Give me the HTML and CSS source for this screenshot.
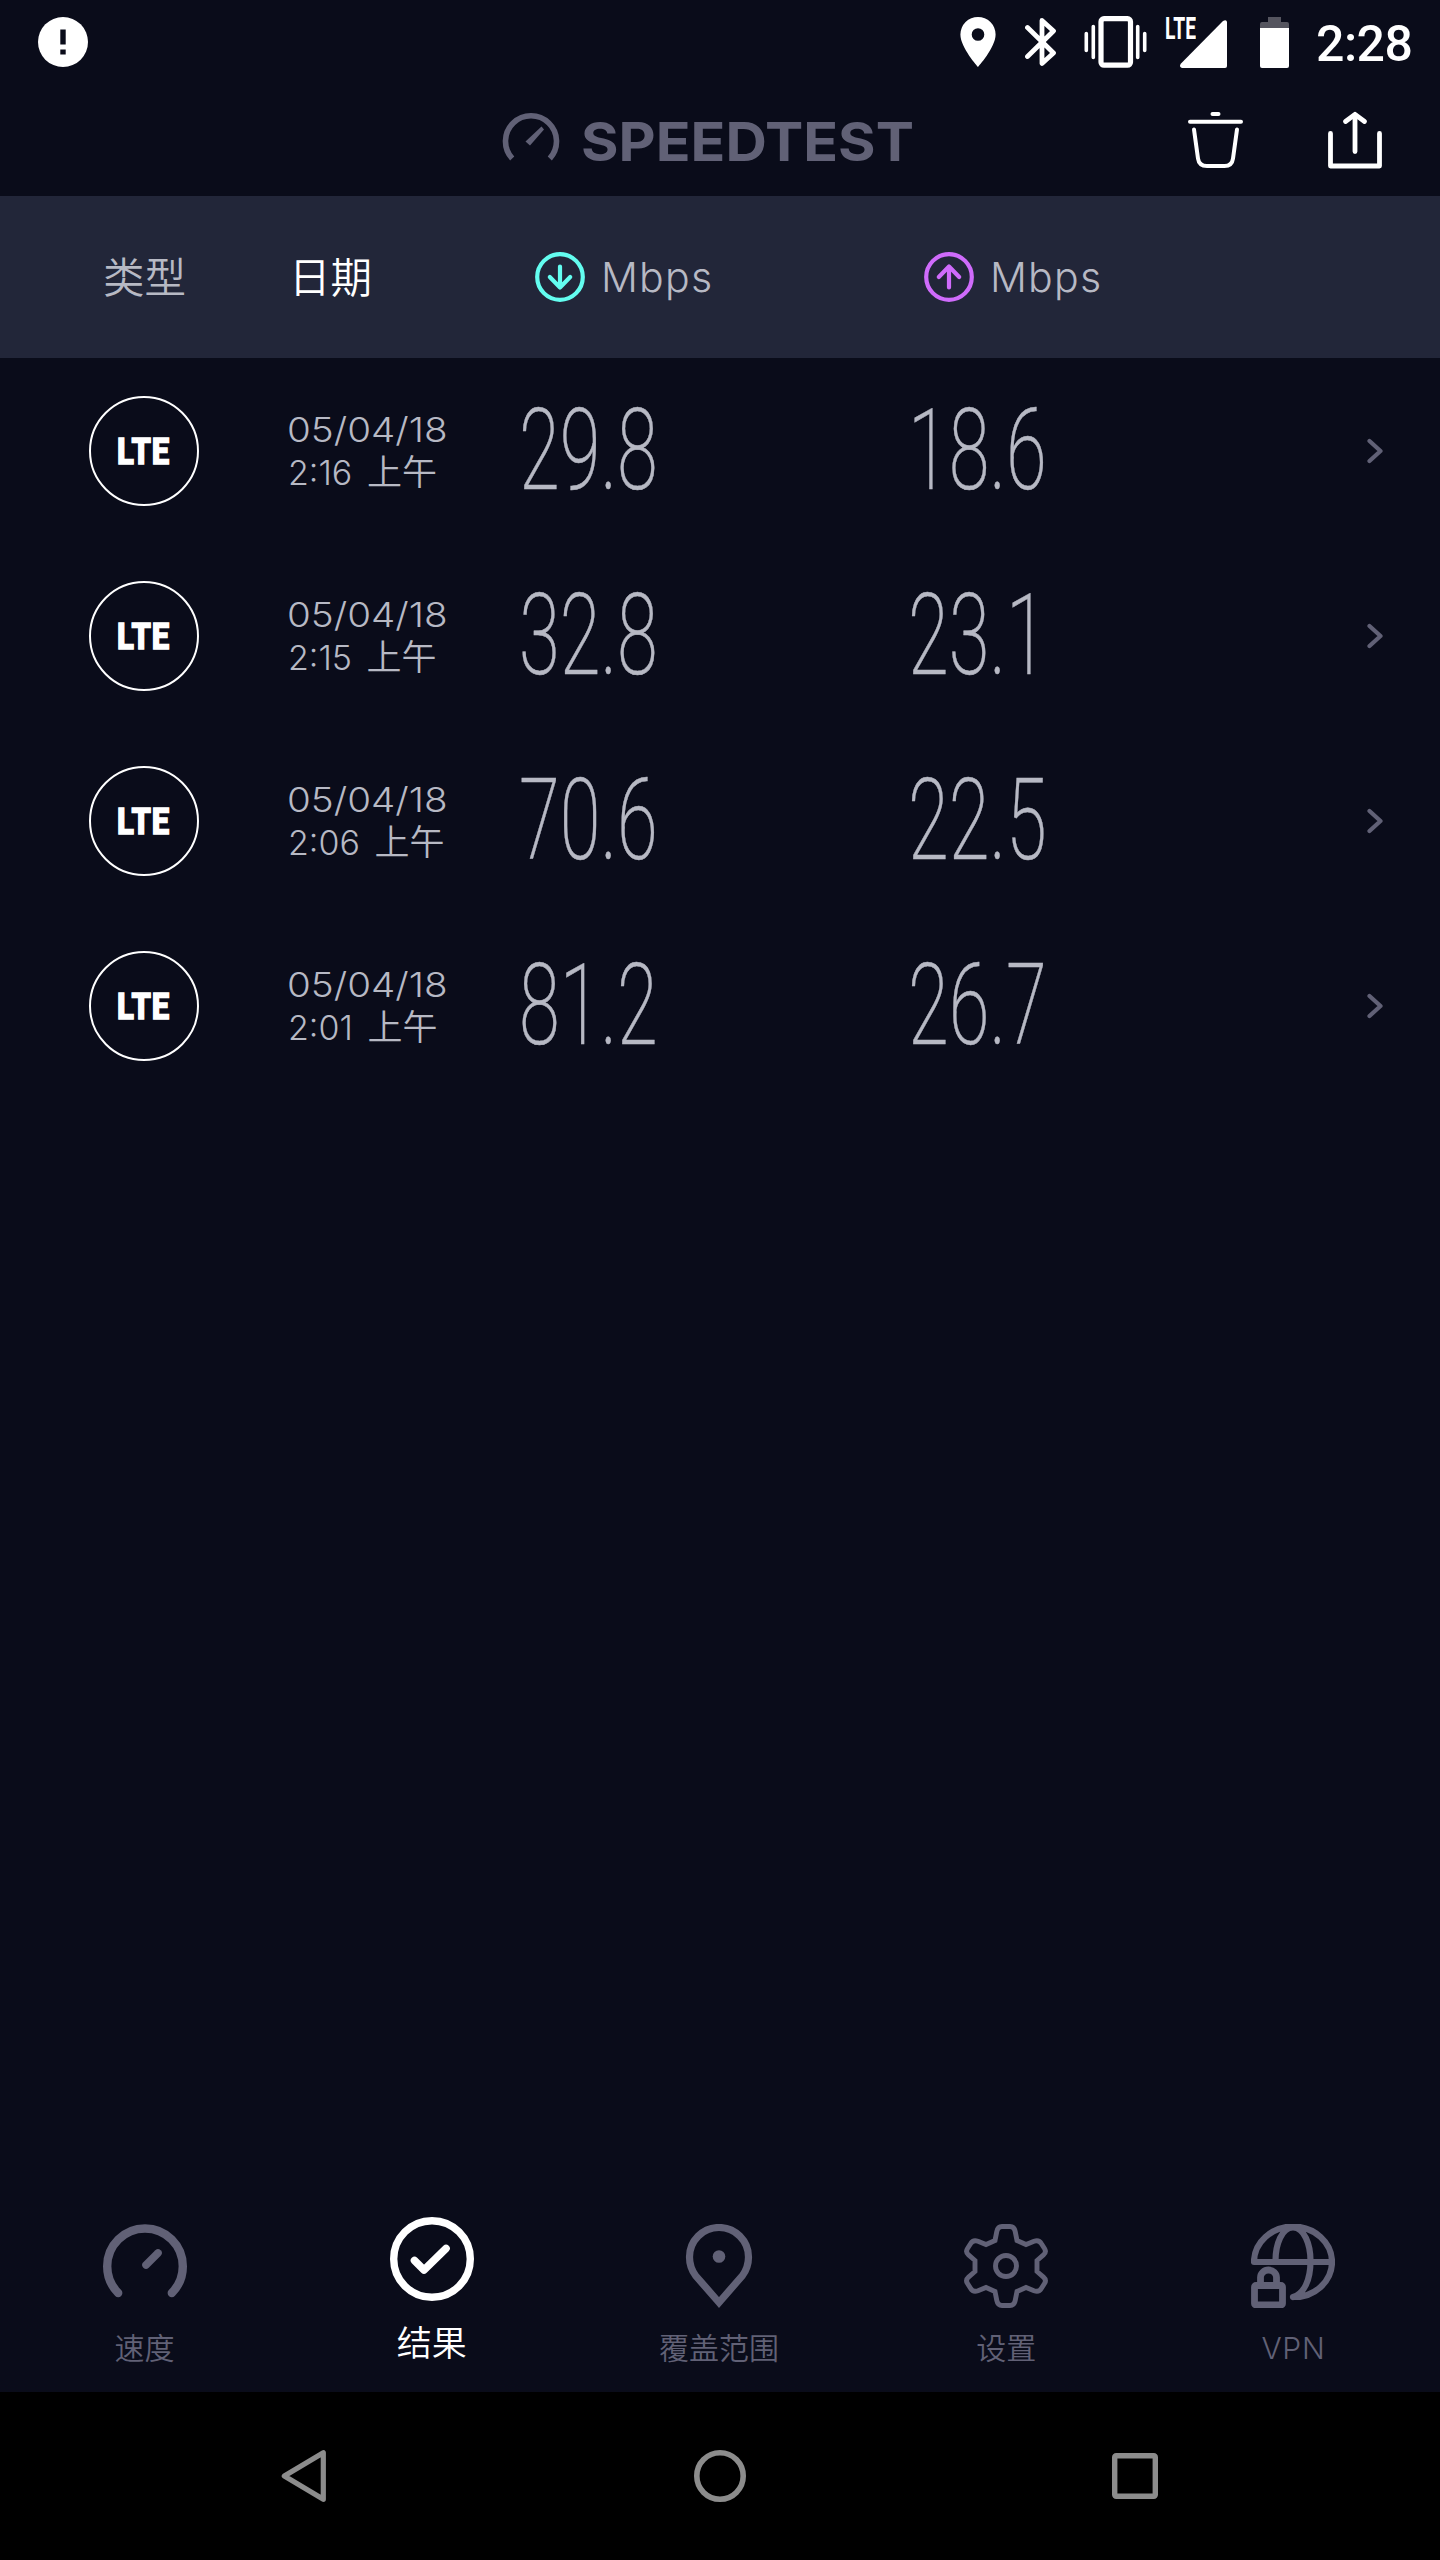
FILE: index.html
```html
<!DOCTYPE html>
<html lang="zh-CN">
<head>
<meta charset="utf-8">
<title>Speedtest</title>
<link rel="stylesheet" href="styles.css">
</head>
<body>
<svg class="defs" width="0" height="0" aria-hidden="true">
  <symbol id="chevron" viewBox="0 0 17 26"><path d="M2.5 3 L13.5 13 L2.5 23" fill="none" stroke="currentColor" stroke-width="4.2" stroke-linecap="round" stroke-linejoin="round"/></symbol>
</svg>
<div class="app">
  <div class="status">
    <svg class="alert" width="50" height="50" viewBox="0 0 50 50"><circle cx="25" cy="25" r="25" fill="#fff"/><path d="M22.3 12.5h5.4v15h-5.4zM22.3 32.5h5.4v5h-5.4z" fill="#0a0c1a"/></svg>
    <div class="status-icons">
      <svg width="36" height="50" viewBox="0 0 36 50"><path fill="#fff" fill-rule="evenodd" d="M18 0A17.6 17.6 0 0 0 .4 17.5C.4 30.5 18 50 18 50S35.600 30.500 35.600 17.500A17.600 17.600 0 0 0 18 0ZM18 11.200a6.300 6.300 0 1 1 0 12.600a6.300 6.300 0 0 1 0-12.600Z"/></svg>
      <svg class="bt" width="32" height="50" viewBox="0 0 32 50"><path d="M2.500 10.500L28.500 36 17 46.500V3.500L28.500 14 2.500 39.500" fill="none" stroke="#fff" stroke-width="4.800" stroke-linejoin="round" stroke-linecap="round"/></svg>
      <svg class="vib" width="63" height="52" viewBox="0 0 63 52"><rect x="17" y="2.700" width="29.500" height="46.500" rx="3" fill="none" stroke="#fff" stroke-width="5.200"/><path d="M2.300 17.500V34.500M9.300 10.500V41.500M53.700 10.500V41.500M60.700 17.500V34.500" stroke="#fff" stroke-width="3.600" stroke-linecap="round"/></svg>
      <div class="sig">
        <svg width="63" height="51" viewBox="0 0 63 51"><path d="M17 51Q13.500 49.500 16 46.500L58 4Q61.500 2 62 5V49Q62 51 60 51Z" fill="#fff"/></svg>
        <span class="sig-text">LTE</span>
      </div>
      <svg class="bat" width="29" height="51" viewBox="0 0 29 51"><path d="M8 0H21V5H27Q29 5 29 7V12H0V7Q0 5 2 5H8Z" fill="#55555f"/><path d="M0 11H29V49Q29 51 27 51H2Q0 51 0 49Z" fill="#fff"/></svg>
      <span class="clock">2:28</span>
    </div>
  </div>

  <header class="bar">
    <div class="logo">
      <svg width="58" height="50" viewBox="502 111 58 50"><path d="M512.200 158.500A25.500 25.500 0 1 1 549.800 158.500" fill="none" stroke="#616176" stroke-width="5.600"/><path d="M525.500 141.500L541.500 126.500 544 129.500 530 145.500Z" fill="#616176"/></svg>
      <span class="brand">SPEEDTEST</span>
    </div>
    <svg class="trash" width="57" height="58" viewBox="1187 111 57 58"><path d="M1212.500 114H1218.500M1190 121.800H1241M1194 129.500L1198 158.500Q1199 166 1207 166H1224.500Q1232 166 1233 158.500L1237 129.500" fill="none" stroke="#fff" stroke-width="4" stroke-linecap="round"/></svg>
    <svg class="share" width="56" height="58" viewBox="1327 111 56 58"><path d="M1330.500 133.500V166H1379.500V133.500M1355 151.500V115M1345.500 121.500L1355 114.300 1364.500 121.500" fill="none" stroke="#fff" stroke-width="4.800" stroke-linecap="round" stroke-linejoin="round"/></svg>
  </header>

  <div class="grid thead">
    <span class="th-type">类型</span>
    <span class="th-date">日期</span>
    <span class="th-speed"><svg width="50" height="50" viewBox="0 0 50 50" fill="none" stroke="#63fdf0" stroke-width="4.200" stroke-linecap="round" stroke-linejoin="round"><circle cx="25" cy="25" r="22.800"/><path d="M25 14.500V35M14.800 25L25 35.500 35.200 25"/></svg><b class="mbps">Mbps</b></span>
    <span class="th-speed"><svg width="50" height="50" viewBox="0 0 50 50" fill="none" stroke="#cf6bfb" stroke-width="4.200" stroke-linecap="round" stroke-linejoin="round"><circle cx="25" cy="25" r="22.800"/><path d="M25 35.500V15M14.800 25L25 14.500 35.200 25"/></svg><b class="mbps">Mbps</b></span>
  </div>

  <main class="results">
    <div class="grid row"><span class="badge"><b>LTE</b></span><span class="date"><b>05/04/18</b><span>2:16 <i>上午</i></span></span><span class="num"><b>29.8</b></span><span class="num"><b>18.6</b></span><svg class="chev" width="17" height="26"><use href="#chevron"/></svg></div>
    <div class="grid row"><span class="badge"><b>LTE</b></span><span class="date"><b>05/04/18</b><span>2:15 <i>上午</i></span></span><span class="num"><b>32.8</b></span><span class="num"><b>23.1</b></span><svg class="chev" width="17" height="26"><use href="#chevron"/></svg></div>
    <div class="grid row"><span class="badge"><b>LTE</b></span><span class="date"><b>05/04/18</b><span>2:06 <i>上午</i></span></span><span class="num"><b>70.6</b></span><span class="num"><b>22.5</b></span><svg class="chev" width="17" height="26"><use href="#chevron"/></svg></div>
    <div class="grid row"><span class="badge"><b>LTE</b></span><span class="date"><b>05/04/18</b><span>2:01 <i>上午</i></span></span><span class="num"><b>81.2</b></span><span class="num"><b>26.7</b></span><svg class="chev" width="17" height="26"><use href="#chevron"/></svg></div>
  </main>

  <nav class="tabs">
    <div class="tab"><svg width="84" height="84" viewBox="-42 -42 84 84" fill="none" stroke="currentColor" stroke-linecap="round"><path d="M-26.800 27A37.800 37.800 0 1 1 26.800 27" stroke-width="8.400"/><path d="M1 -1L13 -13" stroke-width="7.600"/></svg><span>速度</span></div>
    <div class="tab active"><svg width="84" height="84" viewBox="-42 -42 84 84" fill="none" stroke="currentColor" stroke-linecap="round" stroke-linejoin="round"><circle r="38.300" stroke-width="7.400"/><path d="M-17.500 1.500L-8 11 14 -10.500" stroke-width="7.600"/></svg><span>结果</span></div>
    <div class="tab"><svg width="84" height="84" viewBox="-42 -42 84 84" fill="none" stroke="currentColor"><path d="M0 36.500L-23.500 9.500C-27.500 4 -29.500 -2 -29.500 -9A29.500 29.500 0 0 1 29.500 -9C29.500 -2 27.500 4 23.500 9.500Z" stroke-width="7.200"/><circle cx="0" cy="-9.500" r="6.300" fill="currentColor" stroke="none"/></svg><span>覆盖范围</span></div>
    <div class="tab"><svg width="84" height="84" viewBox="-42 -42 84 84" fill="none" stroke="currentColor" stroke-width="4.900"><path d="M-11 -25.500L-9.200 -34.500Q-8.200 -39.500 -4 -39.500H4Q8.200 -39.500 9.200 -34.500L11 -25.500 20 -21.500 28 -24.800Q33 -26.500 35.300 -22.500L38.500 -17.500Q40.800 -14 37.500 -11.200L31 -5.500V5.500L37.500 11.200Q40.800 14 38.500 17.500L35.300 22.500Q33 26.500 28 24.800L20 21.500 11 25.500 9.200 34.500Q8.200 39.500 4 39.500H-4Q-8.200 39.500 -9.200 34.500L-11 25.500 -20 21.500 -28 24.800Q-33 26.500 -35.300 22.500L-38.500 17.500Q-40.800 14 -37.500 11.200L-31 5.500V-5.500L-37.500 -11.200Q-40.800 -14 -38.500 -17.500L-35.300 -22.500Q-33 -26.500 -28 -24.800L-20 -21.500Z"/><circle r="10.500"/></svg><span>设置</span></div>
    <div class="tab"><svg width="84" height="84" viewBox="0 0 84 84" fill="none" stroke="currentColor" stroke-linejoin="round" stroke-linecap="round"><path d="M3 38A38.500 35 0 0 1 81 38A38 35 0 0 1 42 73M3 38H81M24.500 37C24.500 20 31 3.500 42 3.500C53 3.500 59.500 20 59.500 37C59.500 56 53 70 42 73" stroke-width="6.200"/><path d="M9.500 59V53.500A8 7.500 0 0 1 25.500 53.500V59" stroke-width="6.800"/><rect x="3.500" y="61.500" width="28" height="19.500" rx="1.500" stroke-width="6.800"/></svg><span class="vpn">VPN</span></div>
  </nav>

  <div class="sysnav">
    <svg width="46" height="54" viewBox="281 2449 46 54"><path d="M323.300 2452.700V2499.300L284.300 2476Z" fill="none" stroke="#8c8c8c" stroke-width="5.200" stroke-linejoin="round"/></svg>
    <svg width="52" height="52" viewBox="0 0 52 52"><circle cx="26" cy="26" r="23.200" fill="none" stroke="#8c8c8c" stroke-width="5.600"/></svg>
    <svg width="46" height="46" viewBox="0 0 46 46"><rect x="2.700" y="2.700" width="40.600" height="40.600" rx="1.500" fill="none" stroke="#8c8c8c" stroke-width="5.400"/></svg>
  </div>
</div>
</body>
</html>
```
FILE: styles.css
```css
* { box-sizing: border-box; }
body { margin: 0; background: #0a0c1a; }
.defs { display: block; height: 0; }
b, i { font-weight: inherit; font-style: normal; }
svg { display: block; flex: none; }
.app {
  width: 1440px; height: 2560px; display: flex; flex-direction: column;
  color: #fff; font-family: Inter, "Noto Sans CJK SC", sans-serif; white-space: nowrap; overflow: hidden;
}
.status { height: 84px; display: flex; justify-content: space-between; align-items: center; padding: 0 28px 0 38px; }
.status-icons { display: flex; align-items: center; }
.bt { margin-left: 29px; }
.vib { margin-left: 27px; }
.sig { margin-left: 18px; position: relative; }
.sig-text {
  position: absolute; left: 0; top: -5px; font: 700 31px/34px Roboto, sans-serif;
  transform: scaleX(.62); transform-origin: left;
}
.bat { margin-left: 32px; }
.clock { margin-left: 27px; width: 96px; font: 500 50px/60px Roboto, sans-serif; padding-top: 4px; letter-spacing: -.5px; }

.bar { height: 112px; display: flex; align-items: flex-start; padding: 27px 57px 0 502px; }
.logo { display: flex; align-items: flex-start; width: 685px; }
.brand {
  margin: 3px 0 0 21px; font-size: 54px; line-height: 55px; font-weight: 650; color: #616176;
  transform: scaleX(1.062); transform-origin: left;
}
.share { margin-left: 83px; }

.grid { display: grid; grid-template-columns: 289px 232px 389px 456px 1fr; align-items: center; flex: none; }
.thead { height: 162px; background: #222639; font-size: 41.500px; color: #b7b9c4; }
.th-type { padding: 0 0 4px 103px; font-weight: 350; }
.th-date { color: #fff; padding-bottom: 4px; font-weight: 350; }
.th-speed { display: flex; align-items: center; padding-left: 14px; gap: 16px; }
.mbps { font-size: 41px; font-weight: 350; letter-spacing: 1.200px; }
.results { flex: 1; }
.row { height: 185px; color: #b7b9c4; }
.badge {
  width: 110px; height: 110px; margin-left: 89px; border: 2px solid #fff; border-radius: 50%;
  display: flex; align-items: center; justify-content: center; color: #fff;
}
.badge b { font: 800 37px/40px Roboto, sans-serif; -webkit-text-stroke: 1.500px #fff; transform: translateY(1px) scaleX(.84); letter-spacing: 1px; }
.date { display: flex; flex-direction: column; align-items: flex-start; font-size: 34px; line-height: 42px; font-weight: 350; padding-top: 1px; }
.date b { transform: scaleX(1.135); transform-origin: left; margin-left: -2px; }
.date span { margin-left: -1px; }
.date i { font-size: 35px; margin-left: 5px; }
.num b {
  display: inline-block; font: 200 113px/120px Roboto, sans-serif; margin-left: -2px;
  -webkit-text-stroke: .5px #b7b9c4; transform: scaleX(.655); transform-origin: left;
}
.chev { color: #616176; margin: 1px 0 0 1px; }

.tabs { display: flex; height: 184px; padding: 16px 3px 0 1px; font-size: 30px; line-height: 40px; color: #616176; font-weight: 350; }
.tab { flex: 1; display: flex; flex-direction: column; align-items: center; gap: 20px; }
.tab.active { color: #fff; font-size: 35px; margin-top: -7px; gap: 22px; }
.vpn { font-weight: 300; letter-spacing: .700px; }
.sysnav { height: 168px; background: #000; display: flex; align-items: center; justify-content: space-between; padding: 0 282px 0 281px; }
```
